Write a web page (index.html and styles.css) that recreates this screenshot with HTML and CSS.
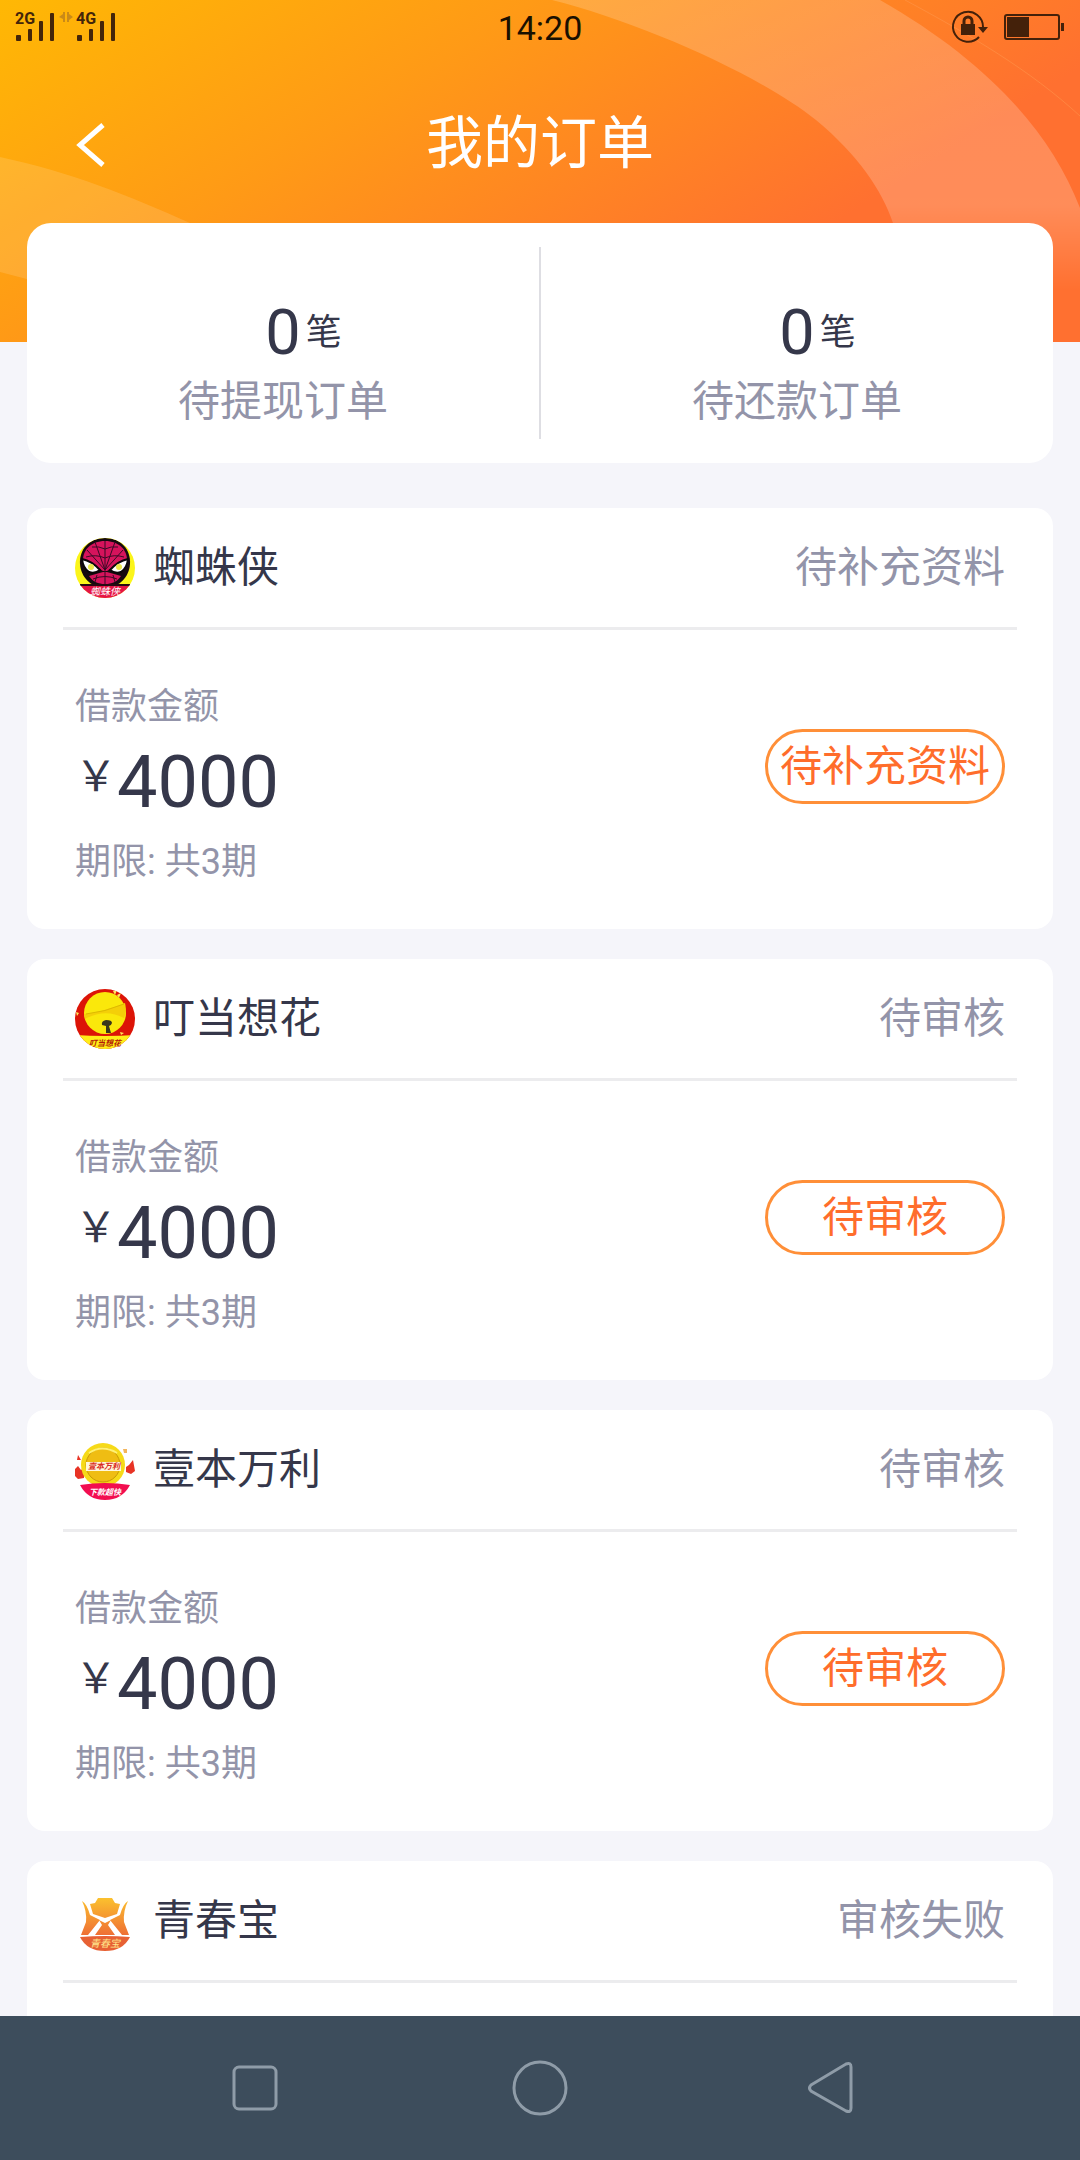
FILE: index.html
```html
<!DOCTYPE html>
<html lang="zh-CN">
<head>
  <meta charset="UTF-8">
  <meta name="viewport" content="width=device-width, initial-scale=1.0">
  <title>我的订单</title>
  <link rel="stylesheet" href="styles.css">
</head>
<body>
  <header class="header">
    <svg class="header-bg" viewBox="0 0 1080 342" preserveAspectRatio="none" aria-hidden="true">
      <defs>
        <linearGradient id="sky" gradientUnits="userSpaceOnUse" x1="0" y1="0" x2="340" y2="537">
          <stop offset="0" stop-color="#ffb804"/>
          <stop offset="0.45" stop-color="#ff9a16"/>
          <stop offset="1" stop-color="#ff7030"/>
        </linearGradient>
        <linearGradient id="band" x1="0" y1="0" x2="0" y2="1">
          <stop offset="0" stop-color="#fff" stop-opacity="0.18"/>
          <stop offset="0.6" stop-color="#fff" stop-opacity="0.2"/>
          <stop offset="0.85" stop-color="#fff" stop-opacity="0"/>
        </linearGradient>
      </defs>
      <rect width="1080" height="342" fill="url(#sky)"/>
      <path d="M552 0C640 22 760 75 816 120C858 155 882 190 893 223L900 342H1080V208C1050 130 985 60 880 0Z" fill="url(#band)"/>
      <path d="M0 157C70 172 130 196 190 223V330C130 310 70 290 0 272Z" fill="#fff" fill-opacity="0.13"/>
      <path d="M905 0C970 35 1030 70 1080 116" fill="none" stroke="#ff9a50" stroke-opacity="0.5"/>
    </svg>
    <div class="status-bar">
      <svg class="signal" viewBox="0 0 140 56" role="img" aria-label="信号">
        <g fill="#44250a">
          <text x="15" y="24">2G</text>
          <rect x="16" y="35" width="5" height="6" rx="1"/>
          <rect x="28" y="29" width="4" height="12" rx="1"/>
          <rect x="39" y="21" width="4" height="20" rx="1"/>
          <rect x="50" y="13" width="4" height="28" rx="1"/>
          <text x="76" y="24">4G</text>
          <rect x="77" y="35" width="5" height="6" rx="1"/>
          <rect x="89" y="29" width="4" height="12" rx="1"/>
          <rect x="100" y="21" width="4" height="20" rx="1"/>
          <rect x="111" y="13" width="4" height="28" rx="1"/>
        </g>
        <path d="M65 12V22H63V19L59 17L63 14V12ZM67 12H69V14L73 17L69 20V22H67Z" fill="#c98a18"/>
      </svg>
      <time class="clock">14:20</time>
      <svg class="power" viewBox="-20 0 140 56" role="img" aria-label="电量">
        <g fill="none" stroke="#44210a" stroke-width="2">
          <path d="M19 37A15 15 0 1 1 23 27"/>
          <path d="M4 25V21A4 4 0 0 1 12 21V25" stroke-width="3"/>
          <rect x="45" y="15" width="54" height="24" rx="2"/>
        </g>
        <path d="M1 24H15V35H1ZM18 27H28L23 33ZM47 17H69V37H47ZM101 23H104V31H101Z" fill="#44210a"/>
      </svg>
    </div>
    <div class="title-bar">
      <button class="back" type="button" aria-label="返回">
        <svg viewBox="0 0 48 48"><path d="M43 5L20 25L43 45" fill="none" stroke="#fff" stroke-width="5"/></svg>
      </button>
      <h1>我的订单</h1>
    </div>
  </header>

  <main>
    <section class="summary">
      <div class="summary-item">
        <p class="count"><strong>0</strong><span>笔</span></p>
        <p class="summary-label">待提现订单</p>
      </div>
      <div class="summary-item">
        <p class="count"><strong>0</strong><span>笔</span></p>
        <p class="summary-label">待还款订单</p>
      </div>
    </section>

    <section class="orders">
      <article class="order">
        <div class="order-head">
          <svg class="logo" viewBox="0 0 60 60" aria-hidden="true">
            <clipPath id="round"><circle cx="30" cy="30" r="30"/></clipPath>
            <g clip-path="url(#round)">
              <rect width="60" height="60" fill="#fbf51a"/>
              <path d="M30 0C46 0 56 12 55 26C54 39 45 49 30 50C15 49 6 39 5 26C4 12 14 0 30 0Z" fill="#160a10"/>
              <path d="M30 3C44 3 52 12 52 22L32 33H28L8 22C8 12 16 3 30 3Z" fill="#d6135c"/>
              <path d="M14 38L28 34H32L46 38C42 44 37 46 30 46C23 46 18 44 14 38Z" fill="#d6135c"/>
              <path d="M30 3V46M30 32L12 12M30 32L20 4M30 32L48 12M30 32L40 4M11 19Q21 16 30 20Q39 16 49 19M17 9Q24 8 30 11Q36 8 43 9M18 41Q30 36 42 41M22 37L20 44M38 37L40 44" fill="none" stroke="#390b25"/>
              <path d="M7 21Q17 23 25 32Q20 36 14 34Q8 30 7 21ZM53 21Q43 23 35 32Q40 36 46 34Q52 30 53 21Z" fill="#fff" stroke="#0b0709" stroke-width="2"/>
              <circle cx="16" cy="29" r="3" fill="#ece84a"/>
              <circle cx="44" cy="29" r="3" fill="#ece84a"/>
              <path d="M0 47H60V60H0Z" fill="#e51445"/>
              <path d="M5 47H55" stroke="#270b12" stroke-width="2"/>
            </g>
            <text x="30" y="57" fill="#fff">蜘蛛侠</text>
          </svg>
          <h2>蜘蛛侠</h2>
          <span class="state">待补充资料</span>
        </div>
        <div class="order-body">
          <div>
            <p class="note">借款金额</p>
            <p class="amount"><span>￥</span><strong>4000</strong></p>
            <p class="note">期限: 共3期</p>
          </div>
          <button class="action" type="button">待补充资料</button>
        </div>
      </article>

      <article class="order">
        <div class="order-head">
          <svg class="logo" viewBox="0 0 60 60" aria-hidden="true">
            <g clip-path="url(#round)">
              <rect width="60" height="60" fill="#dc1407"/>
              <circle cx="30" cy="24" r="21" fill="#fae80b"/>
              <path d="M9 25Q24 24 50 14Q52 22 49 29Q30 19 10 30Z" fill="#f4cf08"/>
              <path d="M11 25Q30 23 49 15" fill="none" stroke="#dcb900"/>
              <path d="M27 36Q26 32 31 31Q37 31 37 34Q36 37 34 37L36 44H31V37Z" fill="#39371c"/>
              <path d="M38 2L42 1L40 6ZM42 6L46 4L44 9ZM1 23L4 24L2 27ZM45 43L49 44L46 46Z" fill="#ffe85a"/>
              <path d="M0 46Q30 48 60 46V60H0Z" fill="#ffee18"/>
            </g>
            <text class="small" x="30" y="57" fill="#b41b08">叮当想花</text>
          </svg>
          <h2>叮当想花</h2>
          <span class="state">待审核</span>
        </div>
        <div class="order-body">
          <div>
            <p class="note">借款金额</p>
            <p class="amount"><span>￥</span><strong>4000</strong></p>
            <p class="note">期限: 共3期</p>
          </div>
          <button class="action" type="button">待审核</button>
        </div>
      </article>

      <article class="order">
        <div class="order-head">
          <svg class="logo" viewBox="0 0 60 60" aria-hidden="true">
            <path d="M0 29L3 26L6 30L9 28V38L3 39L0 36ZM51 27L54 25L58 20L60 31L56 34L51 32Z" fill="#e83325"/>
            <path d="M3 15L6 20H2Z" fill="#e83325"/>
            <path d="M48 9L52 9L52 13L49 13Z" fill="#f3b55c"/>
            <circle cx="28" cy="25" r="22" fill="#f6da18"/>
            <circle cx="28" cy="25" r="17" fill="#efbd13" stroke="#c99806"/>
            <path d="M14 13Q27 4 42 13" fill="none" stroke="#fff173" stroke-width="2"/>
            <rect x="11" y="22" width="35" height="9" fill="#fff7dc"/>
            <path d="M5 45Q30 41 55 45Q47 60 30 60Q13 60 5 45Z" fill="#f20e50"/>
            <text class="small" x="29" y="29" fill="#d92820">壹本万利</text>
            <text class="small" x="30" y="55" fill="#fff">下款超快</text>
          </svg>
          <h2>壹本万利</h2>
          <span class="state">待审核</span>
        </div>
        <div class="order-body">
          <div>
            <p class="note">借款金额</p>
            <p class="amount"><span>￥</span><strong>4000</strong></p>
            <p class="note">期限: 共3期</p>
          </div>
          <button class="action" type="button">待审核</button>
        </div>
      </article>

      <article class="order">
        <div class="order-head">
          <svg class="logo" viewBox="0 0 60 60" aria-hidden="true">
            <defs>
              <linearGradient id="gold" gradientUnits="userSpaceOnUse" x1="0" y1="7" x2="0" y2="46">
                <stop offset="0" stop-color="#fbc12e"/>
                <stop offset="1" stop-color="#ee6b35"/>
              </linearGradient>
            </defs>
            <g fill="url(#gold)">
              <path d="M23 7H37L40 12L45 13L42 23L30 27L18 23L15 13L20 12Z"/>
              <path d="M7 10Q12 13 15 24L25 29L13 44H6L11 31Q12 20 7 10Z"/>
              <path d="M53 10Q48 13 45 24L35 29L47 44H54L49 31Q48 20 53 10Z"/>
              <path d="M24 29L30 32L36 29L33 34L40 44H20L27 34Z"/>
            </g>
            <path d="M5 46Q30 44 55 46Q48 60 30 60Q12 60 5 46Z" fill="#e76134"/>
            <text x="30" y="56" fill="#ffe58b">青春宝</text>
          </svg>
          <h2>青春宝</h2>
          <span class="state">审核失败</span>
        </div>
      </article>
    </section>
  </main>

  <nav class="nav">
    <button type="button" aria-label="最近任务">
      <svg viewBox="0 0 60 60"><rect x="9" y="9" width="42" height="42" rx="5"/></svg>
    </button>
    <button type="button" aria-label="主页">
      <svg viewBox="0 0 60 60"><circle cx="30" cy="30" r="26"/></svg>
    </button>
    <button type="button" aria-label="返回上一页">
      <svg viewBox="0 0 60 60"><path d="M16 27L51 6Q56 4 56 9V50Q56 55 51 53L16 33Q13 30 16 27Z"/></svg>
    </button>
  </nav>
</body>
</html>
```

FILE: styles.css
```css
* {
  box-sizing: border-box;
}
body {
  font-family: Roboto, "Noto Sans CJK SC", sans-serif;
  background: #f5f5fa;
  color: #35374a;
  margin: 0;
  height: 100vh;
  display: flex;
  flex-direction: column;
  overflow: hidden;
}
h1, h2, p {
  margin: 0;
  font-weight: 400;
}
strong {
  font-weight: 400;
}
button {
  font-family: inherit;
  background: none;
  border: none;
  padding: 0;
  cursor: pointer;
}
svg {
  display: block;
}

/* header */
.header {
  position: relative;
  flex: none;
  padding-bottom: 142px;
}
.header-bg {
  position: absolute;
  top: 0;
  left: 0;
  width: 100%;
  height: 100%;
  z-index: -1;
}
.status-bar {
  display: flex;
  justify-content: space-between;
  height: 56px;
}
.signal, .power {
  width: 140px;
  height: 56px;
}
.signal text {
  font-size: 16px;
  font-weight: 700;
}
.clock {
  font-size: 34px;
  line-height: 56px;
  color: #1a1000;
}
.title-bar {
  display: grid;
  grid-template-columns: 120px 1fr 120px;
  align-items: center;
  padding-top: 32px;
  height: 144px;
}
.back {
  width: 48px;
  height: 48px;
  margin-left: 60px;
}
h1 {
  font-size: 57px;
  line-height: 84px;
  color: #fff;
  text-align: center;
}

/* totals */
main {
  flex: 1;
  min-height: 0;
  margin-top: -119px;
  padding: 0 27px;
  overflow-y: auto;
  scrollbar-width: none;
  z-index: 1;
}
.summary {
  display: flex;
  background: #fff;
  border-radius: 24px;
  padding: 24px 0;
}
.summary-item {
  flex: 1;
  height: 192px;
  padding-top: 48px;
  text-align: center;
}
.summary-item + .summary-item {
  border-left: 2px solid #dedee3;
}
.count {
  display: grid;
  grid-template-columns: 1fr auto 1fr;
  align-items: center;
  column-gap: 5px;
  line-height: 76px;
}
.count strong {
  grid-column: 2;
  font-size: 63px;
}
.count span {
  font-size: 36px;
  text-align: left;
}
.summary-label {
  font-size: 42px;
  line-height: 62px;
  color: #9394a9;
}

/* order cards */
.orders {
  display: flex;
  flex-direction: column;
  gap: 30px;
  margin-top: 45px;
}
.order {
  background: #fff;
  border-radius: 18px;
  min-height: 421px;
  padding: 0 36px;
}
.order-head {
  display: flex;
  align-items: center;
  height: 122px;
  padding: 0 12px;
  border-bottom: 3px solid #ececee;
}
.logo {
  width: 60px;
  height: 60px;
}
.logo text {
  font-size: 10px;
  font-style: italic;
  text-anchor: middle;
}
.logo .small {
  font-size: 8px;
  font-weight: 700;
}
h2 {
  font-size: 42px;
  line-height: 62px;
  margin-left: 18px;
}
.state {
  margin-left: auto;
  font-size: 42px;
  line-height: 62px;
  color: #9394a9;
}
.order-body {
  display: flex;
  justify-content: space-between;
  align-items: flex-start;
  padding: 51px 12px 0;
}
.note {
  font-size: 36px;
  line-height: 52px;
  color: #9394a9;
}
.amount {
  display: flex;
  height: 103px;
  line-height: 100px;
}
.amount span {
  font-family: "Noto Sans CJK SC", sans-serif;
  font-size: 42px;
  line-height: 80px;
}
.amount strong {
  font-size: 72px;
}
.action {
  width: 240px;
  height: 75px;
  margin-top: 48px;
  border: 3px solid #ff8f38;
  border-radius: 38px;
  font-size: 42px;
  line-height: 62px;
  color: #ff6d2b;
  white-space: nowrap;
}

/* system buttons */
.nav {
  flex: none;
  display: flex;
  justify-content: space-between;
  align-items: center;
  height: 144px;
  padding: 0 225px;
  background: #3d4d5c;
  z-index: 2;
}
.nav svg {
  width: 60px;
  height: 60px;
  fill: none;
  stroke: #8f9ca8;
  stroke-width: 3;
}
```
